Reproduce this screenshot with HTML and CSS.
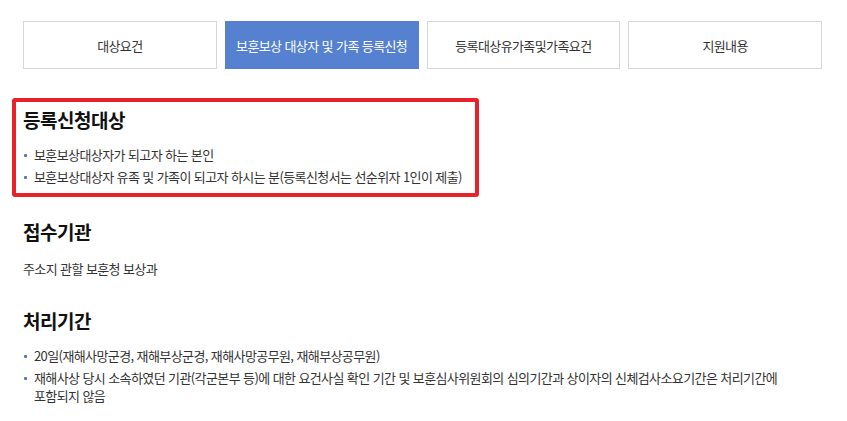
FILE: index.html
```html
<!DOCTYPE html>
<html lang="ko">
<head>
    <meta charset="UTF-8">
    <meta name="viewport" content="width=device-width, initial-scale=1.0">
    <title>보훈보상 대상자 및 가족 등록신청</title>
    <link rel="stylesheet" href="styles.css">
</head>
<body>
    <div class="container">
        <ul class="tabs">
            <li><a href="#">대상요건</a></li>
            <li class="active"><a href="#">보훈보상 대상자 및 가족 등록신청</a></li>
            <li><a href="#">등록대상유가족및가족요건</a></li>
            <li><a href="#">지원내용</a></li>
        </ul>

        <div class="section highlight">
            <h3>등록신청대상</h3>
            <ul class="dot-list">
                <li>보훈보상대상자가 되고자 하는 본인</li>
                <li>보훈보상대상자 유족 및 가족이 되고자 하시는 분(등록신청서는 선순위자 1인이 제출)</li>
            </ul>
        </div>

        <div class="section">
            <h3>접수기관</h3>
            <p>주소지 관할 보훈청 보상과</p>
        </div>

        <div class="section">
            <h3>처리기간</h3>
            <ul class="dot-list">
                <li>20일(재해사망군경, 재해부상군경, 재해사망공무원, 재해부상공무원)</li>
                <li>재해사상 당시 소속하였던 기관(각군본부 등)에 대한 요건사실 확인 기간 및 보훈심사위원회의 심의기간과 상이자의 신체검사소요기간은 처리기간에 포함되지 않음</li>
            </ul>
        </div>
    </div>
</body>
</html>
```

FILE: styles.css
```css
body {
    margin: 0;
    padding: 0;
    background-color: #ffffff;
    color: #333333;
    font-family: "Noto Sans CJK KR", "Noto Sans", sans-serif;
    font-size: 13px;
    letter-spacing: -0.6px;
    word-break: keep-all;
}

.container {
    padding: 21px 25px 0 23px;
}

.tabs {
    list-style: none;
    margin: 0;
    padding: 0;
    display: grid;
    grid-template-columns: repeat(4, 1fr);
    gap: 8px;
}

.tabs li a {
    display: flex;
    align-items: center;
    justify-content: center;
    height: 46px;
    border: 1px solid #d6d6d6;
    color: #333333;
    text-decoration: none;
}

.tabs li.active a {
    background-color: #5581d0;
    border-color: #5581d0;
    color: #ffffff;
}

.section h3 {
    margin: 0;
    font-size: 19px;
    line-height: 24px;
    font-weight: bold;
    color: #111111;
    letter-spacing: -0.5px;
}

.section p {
    margin: 16px 0 0;
    line-height: 18px;
}

.highlight {
    margin: 29px 0 0 -11px;
    width: 452px;
    padding: 6px 0 7px 7px;
    border: 4px solid #e8212b;
    border-radius: 3px;
}

.highlight + .section {
    margin-top: 23px;
}

.section + .section + .section {
    margin-top: 31px;
}

.dot-list {
    list-style: none;
    margin: 14px 0 0;
    padding: 0;
}

.dot-list li {
    position: relative;
    padding-left: 11px;
    line-height: 18px;
    margin-top: 4px;
}

.dot-list li:first-child {
    margin-top: 0;
}

.dot-list li::before {
    content: "";
    position: absolute;
    left: 1px;
    top: 8px;
    width: 3px;
    height: 3px;
    border-radius: 1px;
    background-color: #5a76b0;
}
```
